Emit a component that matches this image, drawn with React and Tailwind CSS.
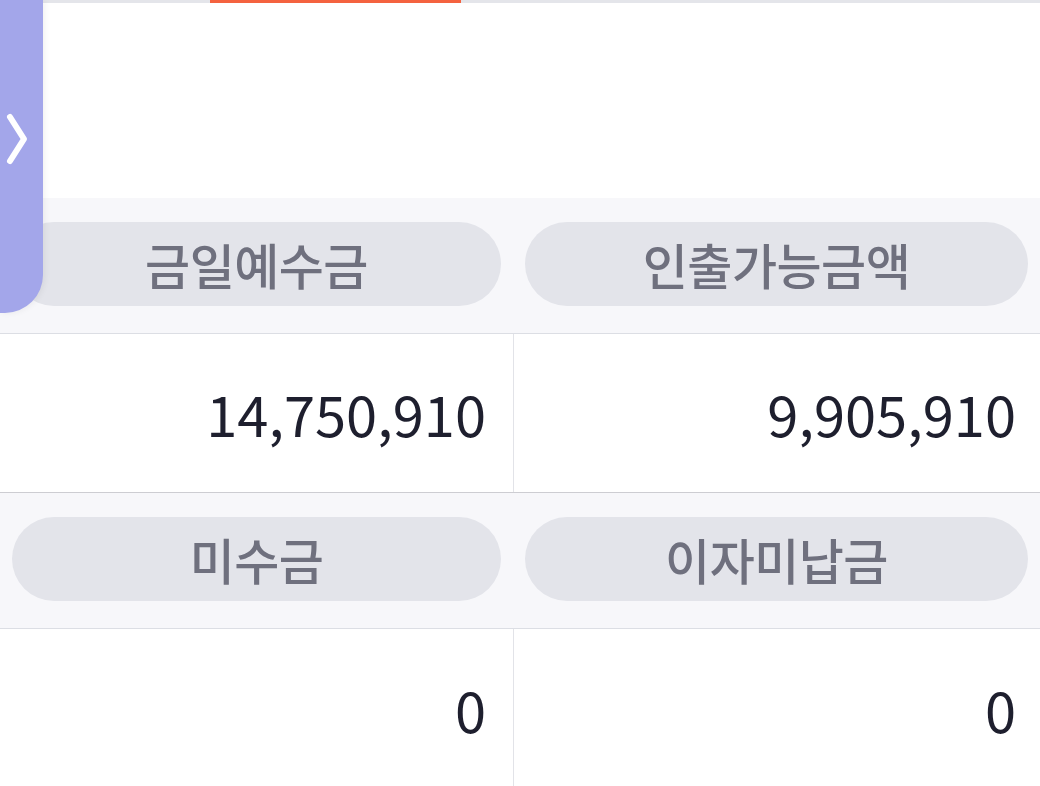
const font = { fontFamily: '"Noto Sans CJK KR", "Noto Sans", sans-serif' };

const Label = ({ text }) => (
    <div className="px-[12px] pt-[24px] pb-[27px]">
        <div className="h-[84px] rounded-full bg-[#e3e4ea] flex items-center justify-center text-[49px] font-medium text-[#6f707e] tracking-[-0.5px]">
            {text}
        </div>
    </div>
);

const Value = ({ text, last }) => (
    <div className={`flex items-center justify-end text-[56px] text-[#1e1f2e] ${last ? "pr-[24px]" : "pr-[27px] border-r border-[#e2e3e8]"}`}>
        {text}
    </div>
);

const App = () => {
    return (
        <div className="relative w-[1040px] h-[786px] bg-white overflow-hidden" style={font}>
            <div className="h-[3px] bg-[#e4e5ea]">
                <div className="ml-[210px] w-[251px] h-full bg-[#f4623f]" />
            </div>
            <div className="h-[195px] bg-white" />

            <div className="grid grid-cols-[513px_1fr] bg-[#f7f7fa] border-b border-[#dcdee4]">
                <Label text="금일예수금" />
                <Label text="인출가능금액" />
            </div>
            <div className="grid grid-cols-[514px_1fr] h-[159px] border-b border-[#cdcdd2]">
                <Value text="14,750,910" />
                <Value text="9,905,910" last />
            </div>

            <div className="grid grid-cols-[513px_1fr] bg-[#f7f7fa] border-b border-[#dcdee4]">
                <Label text="미수금" />
                <Label text="이자미납금" />
            </div>
            <div className="grid grid-cols-[514px_1fr] h-[160px]">
                <Value text="0" />
                <Value text="0" last />
            </div>

            {/* side drawer handle */}
            <div className="absolute left-0 top-0 w-[43px] h-[313px] bg-[#a3a6ea] rounded-br-[38px] shadow-[2px_0_6px_rgba(0,0,0,0.06)]">
                <svg className="absolute left-[3px] top-[112px]" width="26" height="54" viewBox="0 0 26 54" fill="none">
                    <path d="M7 5 L21 27 L7 49" stroke="#ffffff" strokeWidth="6" strokeLinecap="round" strokeLinejoin="round" />
                </svg>
            </div>
        </div>
    );
};

export default App;
